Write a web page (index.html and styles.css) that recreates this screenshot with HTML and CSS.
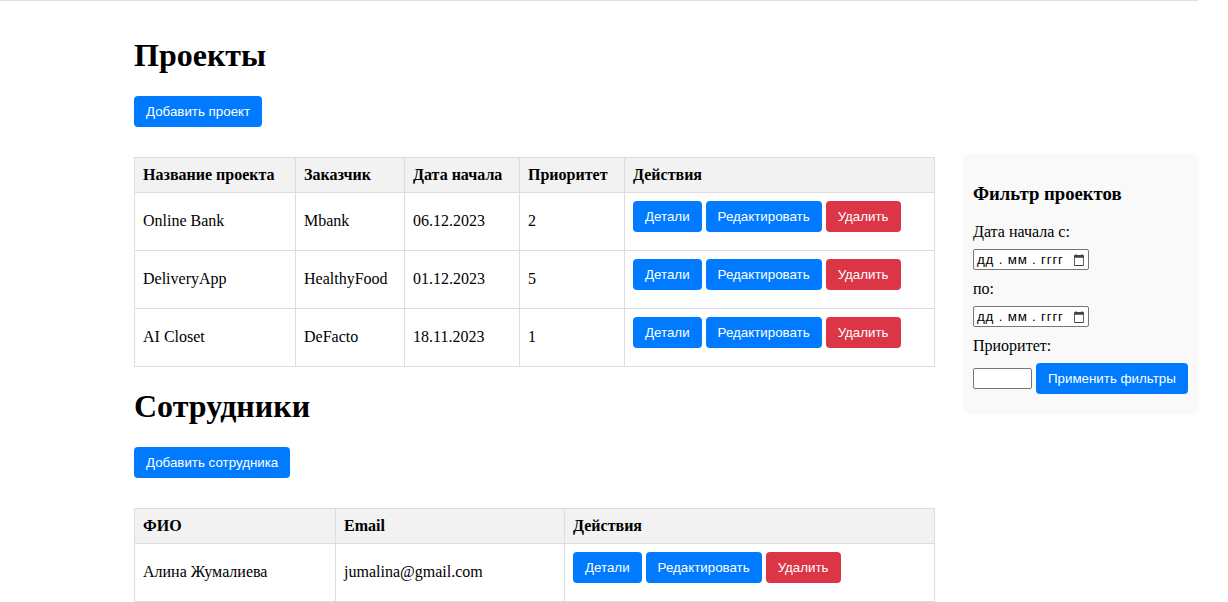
FILE: index.html
```html
<!DOCTYPE html>
<html lang="ru">
<head>
<meta charset="utf-8">
<title>Проекты</title>
<link rel="stylesheet" href="styles.css">
</head>
<body>
<div class="topline"></div>
<div class="page">
  <main class="main">
    <h1 class="title">Проекты</h1>
    <div class="toolbar"><button class="btn btn-primary">Добавить проект</button></div>
    <table class="grid">
      <colgroup>
        <col class="c-name"><col class="c-client"><col class="c-date"><col class="c-prio"><col class="c-act">
      </colgroup>
      <thead>
        <tr><th>Название проекта</th><th>Заказчик</th><th>Дата начала</th><th>Приоритет</th><th>Действия</th></tr>
      </thead>
      <tbody>
        <tr><td>Online Bank</td><td>Mbank</td><td>06.12.2023</td><td>2</td>
          <td><button class="btn btn-primary">Детали</button> <button class="btn btn-primary">Редактировать</button> <button class="btn btn-danger">Удалить</button></td></tr>
        <tr><td>DeliveryApp</td><td>HealthyFood</td><td>01.12.2023</td><td>5</td>
          <td><button class="btn btn-primary">Детали</button> <button class="btn btn-primary">Редактировать</button> <button class="btn btn-danger">Удалить</button></td></tr>
        <tr><td>AI Closet</td><td>DeFacto</td><td>18.11.2023</td><td>1</td>
          <td><button class="btn btn-primary">Детали</button> <button class="btn btn-primary">Редактировать</button> <button class="btn btn-danger">Удалить</button></td></tr>
      </tbody>
    </table>

    <h1 class="title">Сотрудники</h1>
    <div class="toolbar"><button class="btn btn-primary">Добавить сотрудника</button></div>
    <table class="grid">
      <colgroup>
        <col class="c-fio"><col class="c-email"><col class="c-act2">
      </colgroup>
      <thead>
        <tr><th>ФИО</th><th>Email</th><th>Действия</th></tr>
      </thead>
      <tbody>
        <tr><td>Алина Жумалиева</td><td>jumalina@gmail.com</td>
          <td><button class="btn btn-primary">Детали</button> <button class="btn btn-primary">Редактировать</button> <button class="btn btn-danger">Удалить</button></td></tr>
      </tbody>
    </table>
  </main>

  <aside class="filter">
    <h3 class="filter-title">Фильтр проектов</h3>
    <div class="field-label">Дата начала с:</div>
    <div class="date-input">
      <span class="date-text">дд . мм . гггг</span>
      <svg class="cal" width="10" height="12" viewBox="2 1 12 13" preserveAspectRatio="none" aria-hidden="true"><path fill="#444" d="M13 2h-1V1h-1v1H5V1H4v1H3c-.55 0-1 .45-1 1v10c0 .55.45 1 1 1h10c.55 0 1-.45 1-1V3c0-.55-.45-1-1-1zm0 11H3V5h10v8z"/></svg>
    </div>
    <div class="field-label">по:</div>
    <div class="date-input">
      <span class="date-text">дд . мм . гггг</span>
      <svg class="cal" width="10" height="12" viewBox="2 1 12 13" preserveAspectRatio="none" aria-hidden="true"><path fill="#444" d="M13 2h-1V1h-1v1H5V1H4v1H3c-.55 0-1 .45-1 1v10c0 .55.45 1 1 1h10c.55 0 1-.45 1-1V3c0-.55-.45-1-1-1zm0 11H3V5h10v8z"/></svg>
    </div>
    <div class="field-label">Приоритет:</div>
    <div class="apply-row">
      <input class="num-input" type="number">
      <button class="btn btn-primary btn-apply">Применить фильтры</button>
    </div>
  </aside>
</div>
</body>
</html>
```

FILE: styles.css
```css
html, body {
  margin: 0;
  padding: 0;
  background: #fff;
}
body {
  font-family: "Liberation Serif", "Times New Roman", serif;
  font-size: 16px;
  color: #000;
}
.topline {
  width: 1198px;
  height: 1px;
  background: #e3dcec;
}
.page {
  display: flex;
  align-items: flex-start;
  padding: 15px 0 0 134px;
}
.main {
  width: 800px;
  flex: none;
}
.title {
  font-size: 32px;
  font-weight: bold;
  margin: 21.44px 0;
}
.toolbar {
  display: flex;
  margin-bottom: 30px;
}
.btn {
  font-family: "Liberation Sans", Arial, sans-serif;
  font-size: 13.333px;
  line-height: normal;
  color: #fff;
  border: none;
  border-radius: 4px;
  padding: 8px 12px;
  margin: 0;
  cursor: pointer;
}
.btn-primary { background: #007bff; }
.btn-danger { background: #dc3545; }

.grid {
  width: 800px;
  border-collapse: collapse;
  table-layout: fixed;
}
.grid th, .grid td {
  border: 1px solid #ddd;
  padding: 8px;
  text-align: left;
  vertical-align: middle;
}
.grid th {
  background: #f2f2f2;
  font-weight: bold;
}
.grid td .btn {
  margin-bottom: 10px;
}
.c-name { width: 161px; }
.c-client { width: 109px; }
.c-date { width: 115px; }
.c-prio { width: 105px; }
.c-act { width: 310px; }
.c-fio { width: 201px; }
.c-email { width: 229px; }
.c-act2 { width: 370px; }

.filter {
  flex: none;
  width: 215px;
  margin: 138px 0 0 29px;
  padding: 10px 10px 20px;
  background: #f9f9f9;
  border-radius: 5px;
}
.filter-title {
  font-size: 18.72px;
  font-weight: bold;
  margin: 18.72px 0;
}
.field-label {
  margin-bottom: 8px;
}
.date-input {
  box-sizing: border-box;
  width: 116px;
  height: 21px;
  margin-bottom: 10px;
  padding: 0 4px 0 3px;
  border: 1px solid #767676;
  border-radius: 2px;
  background: #fff;
  display: flex;
  align-items: center;
  justify-content: space-between;
  font-family: "Liberation Sans", Arial, sans-serif;
  font-size: 13.333px;
  color: #000;
}
.date-text {
  white-space: pre;
  letter-spacing: 0.8px;
}
.cal {
  display: block;
  flex: none;
}
.apply-row {
  display: flex;
  align-items: center;
  gap: 4px;
  margin-top: 1px;
}
.num-input {
  box-sizing: border-box;
  width: 59px;
  height: 21px;
  margin: 0;
  padding: 1px 2px;
  border: 1px solid #767676;
  border-radius: 2px;
  background: #fff;
  font-family: "Liberation Sans", Arial, sans-serif;
  font-size: 13.333px;
}
.btn-apply {
  flex: none;
}
```
